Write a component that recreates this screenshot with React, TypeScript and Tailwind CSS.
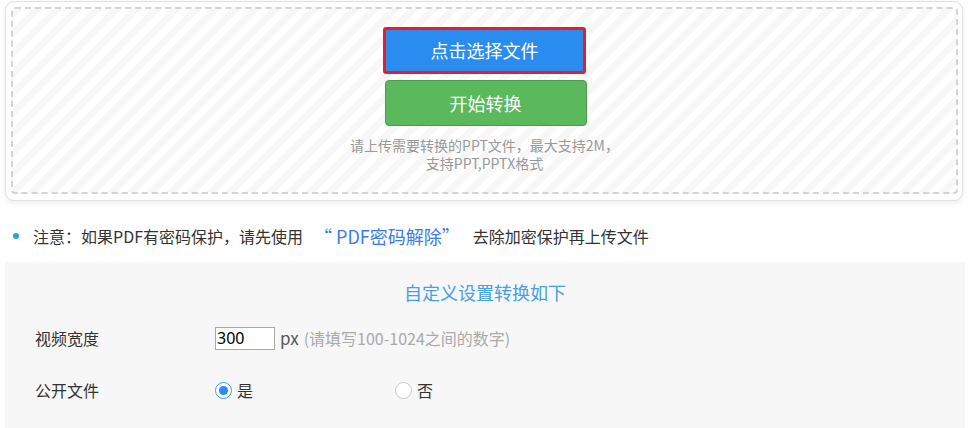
const font = { fontFamily: '"Microsoft YaHei", "Noto Sans CJK SC", "Noto Sans", sans-serif' };

const Radio = ({ checked, label }: { checked?: boolean; label: string }) => (
  <label className="flex items-center gap-[5px]">
    <span
      className={`flex h-[17px] w-[17px] items-center justify-center rounded-full border bg-white ${
        checked ? "border-[#3a9bf0]" : "border-[#c8c8c8]"
      }`}
    >
      {checked && <span className="h-[9px] w-[9px] rounded-full bg-[#2d8cf0]" />}
    </span>
    <span className="text-[16px] text-[#333]">{label}</span>
  </label>
);

export default function App() {
  return (
    <div className="h-[428px] w-[971px] overflow-hidden bg-white" style={font}>
      {/* upload box */}
      <div className="ml-[5px] mr-[8px] mt-[1px] h-[200px] rounded-[9px] border border-[#e2e2e2] bg-white pb-[6px] pl-[5px] pr-[4px] pt-[5px] shadow-[0_2px_6px_rgba(0,0,0,0.08)]">
        <div className="flex h-full flex-col items-center rounded-[4px] border-2 border-dashed border-[#d4d4d4] bg-[repeating-linear-gradient(135deg,#f7f7f7_0,#f7f7f7_7px,#ffffff_7px,#ffffff_14px)] pt-[18px]">
          <button className="flex h-[47px] w-[203px] items-center justify-center rounded-[3px] border-[3px] border-[#ed1c24] bg-[#2b8cf0] text-[18px] text-white">
            点击选择文件
          </button>
          <button className="mt-[6px] flex h-[46px] w-[202px] translate-x-[1px] items-center justify-center rounded-[4px] border border-[#4a9d4a] bg-[#5cb85c] text-[18px] text-white">
            开始转换
          </button>
          <p className="mt-[10px] text-center text-[14px] leading-[18px] text-[#999]">
            请上传需要转换的PPT文件，最大支持2M，
            <br />
            支持PPT,PPTX格式
          </p>
        </div>
      </div>

      {/* note */}
      <div className="mt-[24px] flex h-[22px] items-center pl-[13px] text-[16px] text-[#333]">
        <span className="mr-[14px] h-[6px] w-[6px] rounded-full bg-[#2d9bf0]" />
        <span>注意：如果PDF有密码保护，请先使用</span>
        <span className="ml-[11px] text-[18px] text-[#3a7ce6]">“ PDF密码解除”</span>
        <span className="ml-[13px]">去除加密保护再上传文件</span>
      </div>

      {/* settings */}
      <div className="ml-[5px] mr-[6px] mt-[15px] h-[200px] bg-[#f7f7f7] pl-[30px] pt-[18px]">
        <div className="pr-[30px] text-center text-[18px] leading-[24px] text-[#45a0e6]">
          自定义设置转换如下
        </div>
        <div className="mt-[22px] flex h-[24px] items-center text-[16px] text-[#333]">
          <span className="w-[180px]">视频宽度</span>
          <input
            defaultValue="300"
            className="h-[23px] w-[60px] border border-[#a9a9a9] bg-white px-[1px] text-[16px] text-black outline-none"
            style={{ fontFamily: '"Noto Sans", sans-serif' }}
          />
          <span className="ml-[5px] text-[17px] text-[#555]">px</span>
          <span className="ml-[5px] text-[16px] text-[#aaa]">(请填写100-1024之间的数字)</span>
        </div>
        <div className="mt-[28px] flex h-[24px] items-center text-[16px] text-[#333]">
          <span className="w-[180px]">公开文件</span>
          <div className="w-[180px]">
            <Radio checked label="是" />
          </div>
          <Radio label="否" />
        </div>
      </div>
    </div>
  );
}
